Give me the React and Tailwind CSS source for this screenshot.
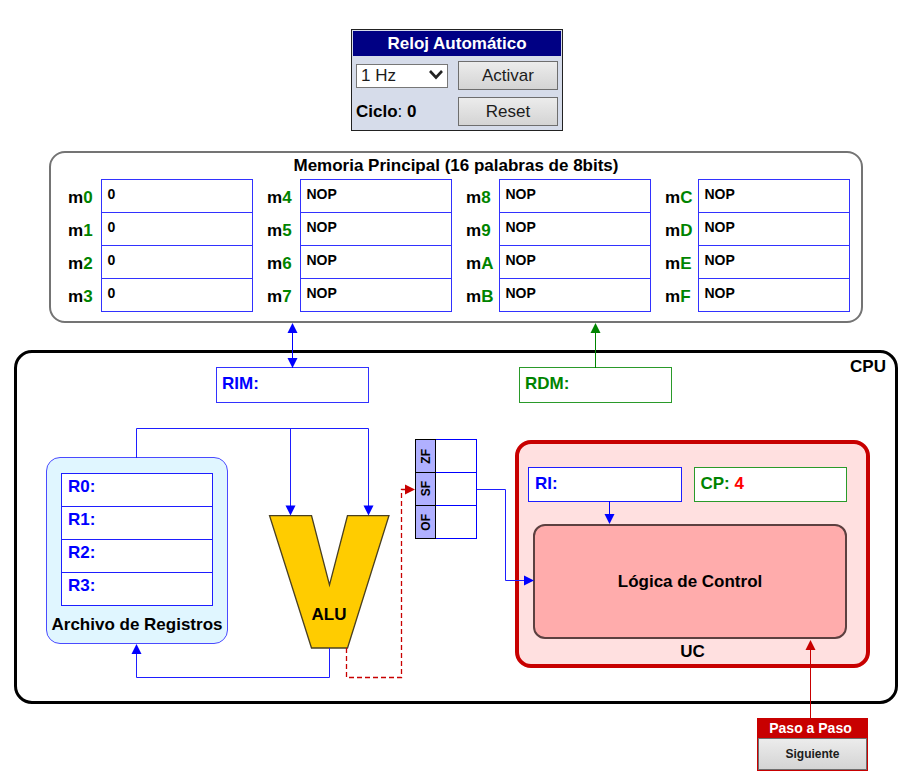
import React from "react";

const MEMORY = [
  [["0", "0"], ["1", "0"], ["2", "0"], ["3", "0"]],
  [["4", "NOP"], ["5", "NOP"], ["6", "NOP"], ["7", "NOP"]],
  [["8", "NOP"], ["9", "NOP"], ["A", "NOP"], ["B", "NOP"]],
  [["C", "NOP"], ["D", "NOP"], ["E", "NOP"], ["F", "NOP"]],
];

const GREY_BUTTON =
  "border border-[#6e6e6e] bg-linear-to-b from-[#ececec] to-[#d4d4d4] text-[#1c1c1c]";

function Clock() {
  return (
    <section className="w-[212px] border border-[#222222] bg-[#d6dcea] p-px text-[17px]">
      <h2 className="bg-[#000084] text-center leading-[25px] font-bold text-white">
        Reloj Automático
      </h2>
      <div className="grid grid-cols-[92px_100px] items-center gap-x-[10px] gap-y-[7px] px-[3px] pt-[5px] pb-[3px]">
        <div className="relative">
          <select
            aria-label="Frecuencia"
            className="block h-[24px] w-full appearance-none border border-[#777777] bg-white px-1 text-[17px] leading-[22px] text-[#1c1c1c]"
          >
            <option>1 Hz</option>
            <option>2 Hz</option>
          </select>
          <svg
            className="pointer-events-none absolute top-[5px] right-[4px]"
            width="16"
            height="12"
            viewBox="0 0 16 12"
            fill="none"
            stroke="#222"
            strokeWidth="2.6"
          >
            <path d="M2 2 L8 8.5 L14 2" />
          </svg>
        </div>
        <button type="button" className={GREY_BUTTON + " h-[29px] leading-[25px]"}>
          Activar
        </button>
        <p className="leading-[25px] text-black">
          <b>Ciclo</b>: <b>0</b>
        </p>
        <button type="button" className={GREY_BUTTON + " h-[29px] leading-[25px]"}>
          Reset
        </button>
      </div>
    </section>
  );
}

function MemoryBank({ words }) {
  return (
    <table className="w-full table-fixed border-collapse">
      <tbody>
        {words.map(([address, value]) => (
          <tr key={address} className="h-[33px]">
            <th scope="row" className="w-[33px] pt-[3px] text-left leading-[20px] font-bold">
              m<span className="text-[#008400]">{address}</span>
            </th>
            <td className="border border-[#3232ff] px-[6px] pt-[6px] align-top text-[14px] leading-[16px] font-bold">
              {value}
            </td>
          </tr>
        ))}
      </tbody>
    </table>
  );
}

function MainMemory() {
  return (
    <section className="mx-[35px] mt-[20px] rounded-[16px] border-2 border-[#747474] pb-[9px]">
      <h2 className="text-center leading-[26px] font-bold">
        Memoria Principal (16 palabras de 8bits)
      </h2>
      <div className="grid grid-cols-4 gap-[14px] pr-[11px] pl-[17px]">
        {MEMORY.map((words) => (
          <MemoryBank key={words[0][0]} words={words} />
        ))}
      </div>
    </section>
  );
}

function BusArrow({ color, both }) {
  return (
    <svg
      className="absolute bottom-full left-1/2 -ml-[6px]"
      width="11"
      height="45"
      viewBox="0 0 11 45"
      fill={color}
    >
      <path d="M5 4h1v41h-1z" />
      <path d="M5.5 0 L10.5 10 H0.5z" />
      {both && <path d="M5.5 45 L10.5 35 H0.5z" />}
    </svg>
  );
}

function RegisterFile() {
  return (
    <section className="mt-[30px] w-[182px] rounded-[14px] border border-[#4a4aff] bg-[#e0f6ff] px-[14px] pt-[15px]">
      <table className="w-full border-collapse bg-white">
        <tbody>
          {["R0:", "R1:", "R2:", "R3:"].map((name) => (
            <tr key={name} className="h-[33px]">
              <th
                scope="row"
                className="border border-[#1e1eff] px-[6px] pt-[3px] text-left align-top leading-[20px] font-bold text-[#0000ff]"
              >
                {name}
              </th>
            </tr>
          ))}
        </tbody>
      </table>
      <h3 className="-mx-[12px] text-center leading-[37px] font-bold whitespace-nowrap">
        Archivo de Registros
      </h3>
    </section>
  );
}

function Alu() {
  return (
    <div className="relative mt-[88px] ml-[40px]">
      <svg width="122" height="134" viewBox="0 0 122 134">
        <path
          d="M1.5 0.5 H43.5 L61.5 70 L79.5 0.5 H121 L79.5 133 H43.5 Z"
          fill="#ffcc00"
          stroke="#4a4020"
          strokeWidth="1.3"
        />
      </svg>
      <span className="absolute inset-x-0 bottom-[24px] text-center leading-[20px] font-bold">
        ALU
      </span>
    </div>
  );
}

function Flags() {
  return (
    <table className="mt-[12px] ml-[25px] w-[62px] table-fixed border-collapse">
      <tbody>
        {["ZF", "SF", "OF"].map((flag) => (
          <tr key={flag} className="h-[33px]">
            <th
              scope="row"
              className="w-[20px] border border-black bg-[#b0b0ff] p-0 text-[12px] leading-[14px] font-bold"
            >
              <span className="inline-block rotate-180 align-middle [writing-mode:vertical-rl]">
                {flag}
              </span>
            </th>
            <td className="border border-[#0000ff]" />
          </tr>
        ))}
      </tbody>
    </table>
  );
}

function ControlUnit() {
  return (
    <section className="mt-[13px] ml-[38px] flex-1 rounded-[16px] border-4 border-[#c80000] bg-[#ffe0e0] pt-[23px]">
      <div className="flex gap-[12px] pr-[19px] pl-[9px]">
        <div className="relative h-[35px] flex-1 border border-[#1e1eff] bg-white px-[6px] leading-[31px] font-bold text-[#0000ff]">
          RI:
          <svg
            className="absolute top-full left-[75px]"
            width="11"
            height="23"
            viewBox="0 0 11 23"
            fill="#0000ff"
          >
            <path d="M5 0h1v20h-1z" />
            <path d="M5.5 23 L10.5 13 H0.5z" />
          </svg>
        </div>
        <div className="h-[35px] flex-1 border border-[#2a9a2a] bg-white px-[6px] leading-[31px] font-bold text-[#008400]">
          CP: <span className="text-[#ff0000]">4</span>
        </div>
      </div>
      <div className="mt-[22px] mr-[19px] ml-[14px] flex h-[115px] items-center justify-center rounded-[12px] border-2 border-[#5c4040] bg-[#ffacac] font-bold">
        Lógica de Control
      </div>
      <h3 className="pt-px text-center leading-[24px] font-bold">UC</h3>
    </section>
  );
}

function Wires() {
  return (
    <svg
      className="pointer-events-none absolute top-0 left-0"
      width="520"
      height="254"
      viewBox="17 427 520 254"
      fill="none"
    >
      <g stroke="#1e1eff">
        <path d="M136.500 458 V428.500 H368.500 V510" />
        <path d="M290.500 428.500 V510" />
        <path d="M329.500 648 V677.500 H136.500 V650" />
        <path d="M477 489.500 H505.500 V580.500 H527" />
      </g>
      <g fill="#0000ff">
        <path d="M290.500 515.500 L285.500 505.500 H295.500z" />
        <path d="M368.500 515.500 L363.500 505.500 H373.500z" />
        <path d="M136.500 644 L131.500 654 H141.500z" />
        <path d="M534 580.500 L524 575.500 V585.500z" />
      </g>
      <path
        d="M346.500 648 V677.500 H401.500 V489.500 H408"
        stroke="#c80000"
        strokeWidth="1.300"
        strokeDasharray="5 3"
      />
      <path d="M415 489.500 L405 484.500 V494.500z" fill="#c80000" />
    </svg>
  );
}

function Cpu() {
  return (
    <section className="mt-[27px] rounded-[18px] border-3 border-black pt-[14px] pb-[33px]">
      <div className="flex pr-[9px] pl-[199px]">
        <div className="relative h-[36px] w-[153px] border border-[#3232ff] px-[5px] leading-[31px] font-bold text-[#0000ff]">
          RIM:
          <BusArrow color="#0000ff" both />
        </div>
        <div className="relative ml-[150px] h-[36px] w-[153px] border border-[#2a9a2a] px-[5px] leading-[31px] font-bold text-[#008400]">
          RDM:
          <BusArrow color="#008400" />
        </div>
        <h2 className="-mt-[11px] ml-auto leading-[22px] font-bold">CPU</h2>
      </div>
      <div className="relative mt-[24px] flex items-start pr-[25px] pl-[29px]">
        <RegisterFile />
        <Alu />
        <Flags />
        <ControlUnit />
        <Wires />
      </div>
    </section>
  );
}

function StepPanel() {
  return (
    <section className="relative mt-[14px] mr-[30px] ml-auto w-[111px] border border-[#c80000] bg-[#c80000]">
      <svg
        className="absolute bottom-full left-[47px]"
        width="11"
        height="79"
        viewBox="0 0 11 79"
        fill="#c80000"
      >
        <path d="M5 4h1v75h-1z" />
        <path d="M5.500 0 L10.500 10 H0.500z" />
      </svg>
      <h2 className="pr-[4px] text-center text-[14px] leading-[19px] font-bold text-white">
        Paso a Paso
      </h2>
      <button
        type="button"
        className={GREY_BUTTON + " block h-[32px] w-full text-[12px] font-bold"}
      >
        Siguiente
      </button>
    </section>
  );
}

export default function App() {
  return (
    <div className="min-h-screen bg-white pb-[10px] font-['Liberation_Sans',Arial,sans-serif] text-[17px] text-black">
      <header className="flex justify-center pt-[29px] pr-[18px] pl-4">
        <Clock />
      </header>
      <main className="pr-[18px] pl-[14px]">
        <MainMemory />
        <Cpu />
        <StepPanel />
      </main>
    </div>
  );
}
